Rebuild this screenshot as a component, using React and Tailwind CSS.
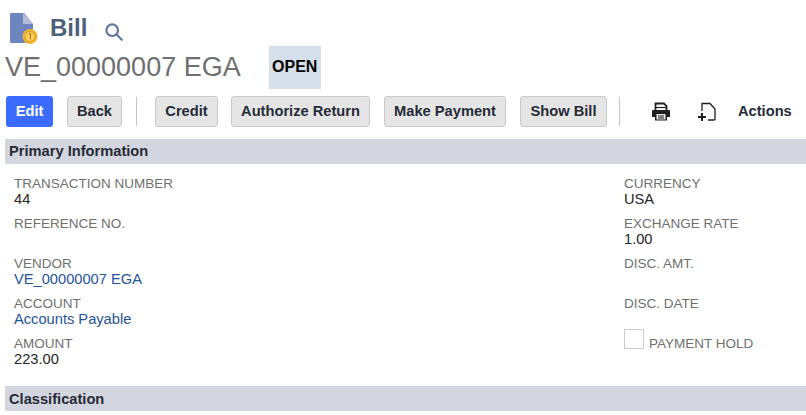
const Field = ({ label, value, link }) => (
  <div className="h-10">
    <div className="text-[13.5px] leading-[16px] text-[#6f6f6f]">{label}</div>
    {value && (
      <div className={`-mt-px text-[14.67px] leading-[16px] ${link ? "text-[#255599]" : "text-[#262626]"}`}>{value}</div>
    )}
  </div>
)

const Button = ({ children, className }) => (
  <button className={`h-[31px] rounded-[3px] border border-[#c9c9c9] bg-[#e5e5e5] pb-[2px] text-[14.67px] font-bold text-[#262b38] ${className}`}>
    {children}
  </button>
)

const Divider = () => <div className="h-[29px] w-px bg-[#c4c4c4]" />

const BillIcon = () => (
  <svg width="28" height="31" viewBox="0 0 28 31">
    <path d="M1 0 H14 L23 11 V29 a1 1 0 0 1 -1 1 H1 a1 1 0 0 1 -1 -1 V1 a1 1 0 0 1 1 -1 Z" fill="#6c84bf" />
    <path d="M13 0 L23 11 H13 Z" fill="#b3bddb" />
    <circle cx="20" cy="23.5" r="7.5" fill="#f0b429" />
    <circle cx="20" cy="23.5" r="5" fill="#f8cf5e" stroke="#d9971a" strokeWidth="0.8" />
    <path d="M18.8 21.5 L20.4 20.5 V26.5" stroke="#b97a10" strokeWidth="1.1" fill="none" />
  </svg>
)

const SearchIcon = () => (
  <svg width="18" height="18" viewBox="0 0 18 18" fill="none" stroke="#64779c" strokeWidth="2.2">
    <circle cx="7.2" cy="7.2" r="5.8" />
    <path d="M11.5 11.5 L16.8 16.8" strokeLinecap="round" />
  </svg>
)

const PrintIcon = () => (
  <svg width="20" height="20" viewBox="0 0 20 20">
    <path d="M4.5 8 V1.5 H13 L15.5 4 V8" fill="none" stroke="#1f1f1f" strokeWidth="1.8" />
    <path d="M4.5 5.5 H15.5" stroke="#1f1f1f" strokeWidth="1.2" />
    <path d="M1 9 a1 1 0 0 1 1 -1 H18 a1 1 0 0 1 1 1 V15 H16 V18.5 H4 V15 H1 Z" fill="#1f1f1f" />
    <path d="M5.5 12 H14.5 V17.5 H5.5 Z" fill="#e8e8e8" />
    <path d="M7 14 H13 M7 16 H13" stroke="#1f1f1f" strokeWidth="1" />
  </svg>
)

const NewIcon = () => (
  <svg width="20" height="20" viewBox="0 0 20 20" fill="none" stroke="#1f1f1f">
    <path d="M5 9 V1.5 H13 L18 7 V17 a1 1 0 0 1 -1 1 H11" strokeWidth="1.3" />
    <path d="M5 11 V19 M1 15 H9" strokeWidth="2" />
  </svg>
)

export default function App() {
  return (
    <div className="w-[806px] h-[415px] overflow-hidden bg-white font-['Liberation_Sans',Arial,sans-serif]">
      {/* Title */}
      <div className="flex items-center h-[34px] mt-[11px] pl-[10px]">
        <BillIcon />
        <h1 className="ml-[12px] text-[24px] font-bold leading-[34px] text-[#4d5f79]">Bill</h1>
        <div className="ml-[18px] mt-[8px]"><SearchIcon /></div>
      </div>

      <div className="flex items-start h-[44px] mt-px pl-[5px]">
        <span className="mt-[5px] text-[27px] leading-[32px] text-[#6f6f6f]">VE_00000007 EGA</span>
        <span className="ml-[28px] flex h-[43px] w-[52px] items-center justify-center bg-[#d5dfe9] pb-[2px] text-[16px] font-bold text-black">OPEN</span>
      </div>

      {/* Toolbar */}
      <div className="flex items-center h-[31px] mt-[6px] pl-[6px]">
        <button className="h-[31px] w-[47px] rounded-[3px] bg-[#3c6cff] pb-[2px] text-[14.67px] font-bold text-white">Edit</button>
        <Button className="ml-[14px] w-[55px]">Back</Button>
        <div className="ml-[14px]"><Divider /></div>
        <Button className="ml-[18px] w-[63px]">Credit</Button>
        <Button className="ml-[13px] w-[139px]">Authorize Return</Button>
        <Button className="ml-[14px] w-[122px]">Make Payment</Button>
        <Button className="ml-[14px] w-[87px]">Show Bill</Button>
        <div className="ml-[12px]"><Divider /></div>
        <div className="ml-[31px]"><PrintIcon /></div>
        <div className="ml-[26px]"><NewIcon /></div>
        <span className="ml-[21px] pb-[2px] text-[14.67px] font-bold text-[#262b38]">Actions</span>
      </div>

      {/* Primary Information */}
      <div className="ml-[5px] mt-[12px] h-[25px] bg-[#d3d6df] pl-[4px] text-[14.67px] font-bold leading-[25px] text-[#262b38]">
        Primary Information
      </div>

      <div className="flex justify-between h-[222px] pt-[12px] pl-[14px]">
        <div>
          <Field label="TRANSACTION NUMBER" value="44" />
          <Field label="REFERENCE NO." />
          <Field label="VENDOR" value="VE_00000007 EGA" link />
          <Field label="ACCOUNT" value="Accounts Payable" link />
          <Field label="AMOUNT" value="223.00" />
        </div>
        <div className="w-[182px]">
          <Field label="CURRENCY" value="USA" />
          <Field label="EXCHANGE RATE" value="1.00" />
          <Field label="DISC. AMT." />
          <Field label="DISC. DATE" />
          <div className="-mt-[7px] flex items-start">
            <div className="h-5 w-5 border border-[#cccccc] bg-white" />
            <span className="ml-[5px] mt-[7px] text-[13.5px] leading-[16px] text-[#6f6f6f]">PAYMENT HOLD</span>
          </div>
        </div>
      </div>

      {/* Classification */}
      <div className="ml-[5px] h-[25px] bg-[#d3d6df] pl-[4px] pt-px text-[14.67px] font-bold leading-[25px] text-[#262b38]">
        Classification
      </div>
    </div>
  )
}
